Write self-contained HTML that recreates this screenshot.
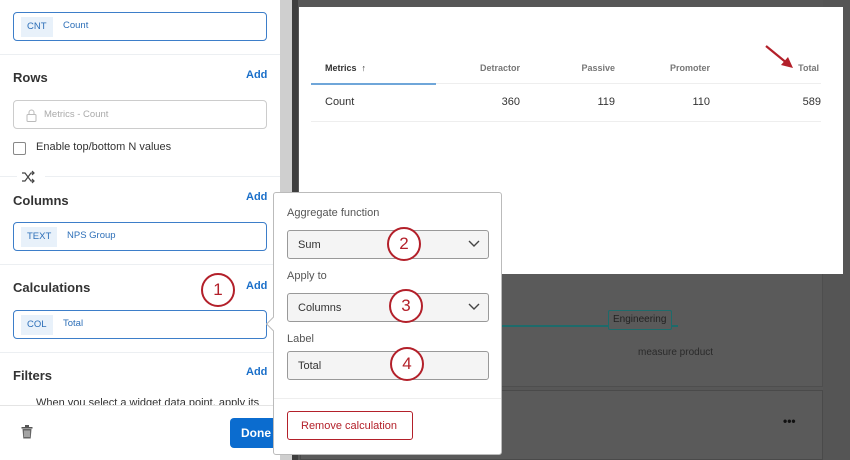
<!DOCTYPE html>
<html><head><style>
*{box-sizing:border-box;margin:0;padding:0}
body{width:850px;height:460px;overflow:hidden;background:#575757;font-family:"Liberation Sans",sans-serif;position:relative}
.abs{position:absolute}
.left{left:0;top:0;width:280px;height:460px;background:#fff}
.h{font-weight:bold;font-size:13px;color:#333}
.add{color:#1a6fc9;font-size:11px;font-weight:bold}
.box{border:1px solid #3d7ec9;border-radius:4px;height:29px;background:#fff}
.tag{position:absolute;left:7px;top:4px;height:20px;line-height:20px;background:#e8f1fa;color:#2d6fb8;font-size:9.5px;padding:0 6px}
.tv{position:absolute;top:0;line-height:26px;color:#2d6fb8;font-size:9.5px}
.sep{height:1px;background:#eceff2;left:0;width:280px}
.lbl{font-size:11px;color:#555}
.sel{left:13px;width:202px;height:29px;border:1px solid #999;border-radius:3px;background:#f4f4f4;font-size:11px;color:#333;padding:8px 10px}
.circ{width:34px;height:34px;border:2px solid #b3202a;border-radius:50%;background:#fff;color:#b3202a;font-size:17px;text-align:center;line-height:30px}
.th{font-size:9px;color:#777;font-weight:bold;top:56px}
.td{font-size:11px;color:#333;top:89px}
</style></head><body>
<div class="abs left">
  <div class="abs box" style="left:13px;top:12px;width:254px"><span class="tag">CNT</span><span class="tv" style="left:49px">Count</span></div>
  <div class="abs sep" style="top:54px"></div>
  <div class="abs h" style="left:13px;top:70px">Rows</div>
  <div class="abs add" style="left:246px;top:69px">Add</div>
  <div class="abs" style="left:13px;top:100px;width:254px;height:29px;border:1px solid #ccc;border-radius:4px">
    <svg class="abs" style="left:12px;top:8px" width="11" height="13" viewBox="0 0 11 13"><rect x="1" y="5.5" width="9" height="7" rx="1" fill="none" stroke="#bbb"/><path d="M3 5.5V3.5a2.5 2.5 0 0 1 5 0V5.5" fill="none" stroke="#bbb"/></svg>
    <span class="abs" style="left:30px;top:8px;font-size:9.5px;color:#aaa">Metrics - Count</span></div>
  <div class="abs" style="left:13px;top:142px;width:13px;height:13px;border:1px solid #888;border-radius:2px"></div>
  <div class="abs" style="left:36px;top:141px;font-size:11px;color:#333">Enable top/bottom N values</div>
  <div class="abs sep" style="top:176px"></div>
  <div class="abs" style="left:17px;top:168px;width:28px;height:18px;background:#fff"></div>
  <svg class="abs" style="left:21px;top:170px" width="14" height="14" viewBox="0 0 14 14" fill="none" stroke="#444" stroke-width="1.2"><path d="M1 3h3l6 8h3M1 11h3l6-8h3M11 1l2 2-2 2M11 9l2 2-2 2"/></svg>
  <div class="abs h" style="left:13px;top:193px">Columns</div>
  <div class="abs add" style="left:246px;top:191px">Add</div>
  <div class="abs box" style="left:13px;top:222px;width:254px"><span class="tag">TEXT</span><span class="tv" style="left:53px">NPS Group</span></div>
  <div class="abs sep" style="top:264px"></div>
  <div class="abs h" style="left:13px;top:280px">Calculations</div>
  <div class="abs circ" style="left:201px;top:273px;width:34px;height:34px">1</div>
  <div class="abs add" style="left:246px;top:280px">Add</div>
  <div class="abs box" style="left:13px;top:310px;width:254px"><span class="tag">COL</span><span class="tv" style="left:49px">Total</span></div>
  <div class="abs sep" style="top:352px"></div>
  <div class="abs h" style="left:13px;top:368px">Filters</div>
  <div class="abs add" style="left:246px;top:366px">Add</div>
  <div class="abs" style="left:36px;top:397px;font-size:11px;color:#333;height:8px;overflow:hidden;white-space:nowrap">When you select a widget data point, apply its</div>
  <div class="abs sep" style="top:405px;background:#e4e4e4"></div>
  <svg class="abs" style="left:21px;top:425px" width="12" height="14" viewBox="0 0 12 14"><rect x="0.5" y="2" width="11" height="1.6" fill="#555"/><rect x="4" y="0" width="4" height="2" fill="#555"/><path d="M1.5 4h9l-0.8 9.5h-7.4z" fill="#666"/><path d="M4 5.5v6.5M6 5.5v6.5M8 5.5v6.5" stroke="#fff" stroke-width="0.8"/></svg>
  <div class="abs" style="left:230px;top:418px;width:60px;height:30px;background:#0b6ccf;border-radius:4px;color:#fff;font-size:12px;font-weight:bold;padding:8px 11px">Done</div>
</div>
<div class="abs" style="left:280px;top:0;width:12px;height:460px;background:#cfcfcf"></div>
<div class="abs" style="left:292px;top:0;width:6px;height:460px;background:#3e3e3e"></div>
<!-- background cards -->
<div class="abs" style="left:300px;top:270px;width:523px;height:117px;background:#5a5a5a;border:1px solid #4e4e4e"></div>
<div class="abs" style="left:478px;top:325px;width:200px;height:2px;background:#1d6b6b"></div>
<div class="abs" style="left:608px;top:310px;width:64px;height:20px;border:1.5px solid #1d6b6b;border-radius:2px;font-size:10px;color:#222;padding:3px 4px;background:#5a5a5a">Engineering</div>
<div class="abs" style="left:638px;top:347px;font-size:10px;color:#2a2a2a">measure product</div>
<div class="abs" style="left:300px;top:390px;width:523px;height:70px;background:#5a5a5a;border:1px solid #4a4a4a"></div>
<div class="abs" style="left:783px;top:414px;font-size:12px;color:#111;font-weight:bold">•••</div>
<div class="abs" style="left:823px;top:0;width:27px;height:460px;background:#555"></div>
<!-- chart card -->
<div class="abs" style="left:299px;top:7px;width:544px;height:267px;background:#fff">
  <div class="abs th" style="left:26px;color:#333">Metrics &nbsp;↑</div>
  <div class="abs th" style="right:323px">Detractor</div>
  <div class="abs th" style="right:228px">Passive</div>
  <div class="abs th" style="right:133px">Promoter</div>
  <div class="abs th" style="right:24px">Total</div>
  <svg class="abs" style="left:465px;top:37px" width="32" height="30"><path d="M2 2L24 20" stroke="#b3202a" stroke-width="2.2"/><path d="M29 24L17 21L24 13Z" fill="#b3202a"/></svg>
  <div class="abs" style="left:12px;top:76px;width:125px;height:1.5px;background:#6fa6d9"></div>
  <div class="abs" style="left:137px;top:76px;width:385px;height:1px;background:#eee"></div>
  <div class="abs td" style="left:26px">Count</div>
  <div class="abs td" style="right:323px">360</div>
  <div class="abs td" style="right:228px">119</div>
  <div class="abs td" style="right:133px">110</div>
  <div class="abs td" style="right:22px">589</div>
  <div class="abs" style="left:12px;top:114px;width:510px;height:1px;background:#eee"></div>
</div>
<!-- popover -->
<div class="abs" style="left:273px;top:192px;width:229px;height:263px;background:#fff;border:1px solid #bbb;border-radius:3px">
  <div class="abs" style="left:-6px;top:126px;width:10px;height:10px;background:#fff;border-left:1px solid #bbb;border-bottom:1px solid #bbb;transform:rotate(45deg)"></div>
  <div class="abs lbl" style="left:13px;top:14px">Aggregate function</div>
  <div class="abs sel" style="top:37px">Sum</div>
  <div class="abs lbl" style="left:13px;top:77px">Apply to</div>
  <div class="abs sel" style="top:100px">Columns</div>
  <svg class="abs" style="left:194px;top:47px" width="12" height="8"><path d="M1 1l5 5 5-5" fill="none" stroke="#444" stroke-width="1.4"/></svg>
  <svg class="abs" style="left:194px;top:110px" width="12" height="8"><path d="M1 1l5 5 5-5" fill="none" stroke="#444" stroke-width="1.4"/></svg>
  <div class="abs lbl" style="left:13px;top:140px">Label</div>
  <div class="abs sel" style="top:158px">Total</div>
  <div class="abs circ" style="left:113px;top:34px">2</div>
  <div class="abs circ" style="left:115px;top:96px">3</div>
  <div class="abs circ" style="left:116px;top:154px">4</div>
  <div class="abs" style="left:0;top:205px;width:227px;height:1px;background:#eee"></div>
  <div class="abs" style="left:13px;top:218px;width:126px;height:29px;border:1px solid #b3202a;border-radius:3px;color:#b3202a;font-size:11px;padding:8px 13px">Remove calculation</div>
</div>
</body></html>
